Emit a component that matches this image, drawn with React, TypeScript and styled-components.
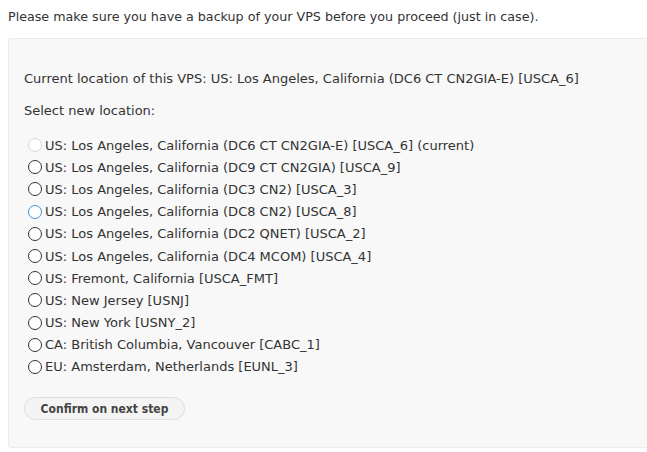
import React from 'react'
import styled, { createGlobalStyle } from 'styled-components'

const GlobalStyle = createGlobalStyle`
  html, body {
    margin: 0;
    padding: 0;
    background: #fff;
    overflow: hidden;
  }
  body {
    font-family: 'DejaVu Sans', Verdana, sans-serif;
    font-size: 13px;
    color: #333;
  }
`

const Page = styled.div`
  padding: 8px 0 0 8px;
`

const Notice = styled.p`
  margin: 0 0 12px 0;
  line-height: 18px;
  font-size: 12.7px;
`

const Panel = styled.div`
  background: #f8f8f8;
  border: 1px solid #ececec;
  border-right: none;
  border-radius: 3px 0 0 3px;
  padding: 31px 0 0 15px;
  height: 410px;
  box-sizing: border-box;
`

const Para = styled.p`
  margin: 0 0 14px 0;
  line-height: 18px;
`

const List = styled.div`
  display: flex;
  flex-direction: column;
  margin: 7px 0 19px 4px;
`

const Option = styled.label`
  display: flex;
  align-items: center;
  height: 22.2px;
  cursor: pointer;
`

const Circle = styled.span<{ $state: 'disabled' | 'normal' | 'focus' }>`
  width: 14px;
  height: 14px;
  border-radius: 50%;
  box-sizing: border-box;
  border: 1px solid
    ${({ $state }) =>
      $state === 'disabled' ? '#d6d6d6' : $state === 'focus' ? '#3d8fd9' : '#333'};
  background: #fff;
  margin-right: 3px;
  flex-shrink: 0;
`

const Button = styled.button`
  font-family: 'DejaVu Sans Condensed', 'DejaVu Sans', Verdana, sans-serif;
  font-size: 12px;
  font-weight: bold;
  color: #444;
  background: #f4f4f4;
  border: 1px solid #dedede;
  border-radius: 12px;
  height: 23px;
  width: 161px;
  padding: 0;
  cursor: pointer;
`

const locations = [
  'US: Los Angeles, California (DC6 CT CN2GIA-E) [USCA_6] (current)',
  'US: Los Angeles, California (DC9 CT CN2GIA) [USCA_9]',
  'US: Los Angeles, California (DC3 CN2) [USCA_3]',
  'US: Los Angeles, California (DC8 CN2) [USCA_8]',
  'US: Los Angeles, California (DC2 QNET) [USCA_2]',
  'US: Los Angeles, California (DC4 MCOM) [USCA_4]',
  'US: Fremont, California [USCA_FMT]',
  'US: New Jersey [USNJ]',
  'US: New York [USNY_2]',
  'CA: British Columbia, Vancouver [CABC_1]',
  'EU: Amsterdam, Netherlands [EUNL_3]',
]

const App = () => {
  return (
    <Page>
      <GlobalStyle />
      <Notice>Please make sure you have a backup of your VPS before you proceed (just in case).</Notice>
      <Panel>
        <Para>Current location of this VPS: US: Los Angeles, California (DC6 CT CN2GIA-E) [USCA_6]</Para>
        <Para>Select new location:</Para>
        <List>
          {locations.map((loc, i) => (
            <Option key={loc}>
              <Circle $state={i === 0 ? 'disabled' : i === 3 ? 'focus' : 'normal'} />
              {loc}
            </Option>
          ))}
        </List>
        <Button>Confirm on next step</Button>
      </Panel>
    </Page>
  )
}

export default App
